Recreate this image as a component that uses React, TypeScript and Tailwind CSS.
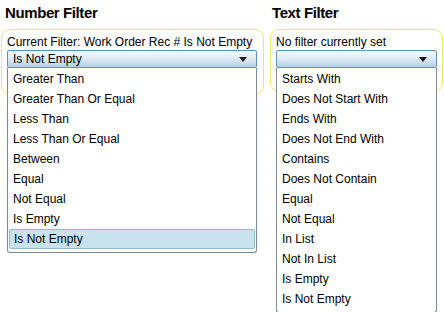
import React from "react";

const font = { fontFamily: '"Liberation Sans", Arial, sans-serif' };

function Arrow() {
  return (
    <svg width="8" height="5" viewBox="0 0 8 5" className="block">
      <path d="M0 0 L8 0 L4 5 Z" fill="#1a1a1a" />
    </svg>
  );
}

function Combo({ value }: { value: string }) {
  return (
    <div className="h-[18px] flex items-center justify-between pl-[5px] pr-[9px] rounded-[2px] border border-[#5e93b8] bg-gradient-to-b from-[#f4f9fc] via-[#dce9f4] to-[#b4cfe5] text-[12px] text-black leading-none">
      <span>{value}</span>
      <Arrow />
    </div>
  );
}

function List({ items, selected }: { items: string[]; selected?: string }) {
  return (
    <div className="absolute left-0 right-0 top-[18px] bg-white border border-[#7d8a96] border-t-0 rounded-b-[3px] px-[1px] pt-[1px] pb-[3px]">
      {items.map((it) => (
        <div
          key={it}
          className={
            "h-[20px] flex items-center pl-[4px] text-[12px] text-black " +
            (it === selected ? "bg-[#c8e3ee] border border-[#8fbccf] rounded-[2px] pl-[3px]" : "")
          }
        >
          {it}
        </div>
      ))}
    </div>
  );
}

export default function App() {
  const num = [
    "Greater Than",
    "Greater Than Or Equal",
    "Less Than",
    "Less Than Or Equal",
    "Between",
    "Equal",
    "Not Equal",
    "Is Empty",
    "Is Not Empty",
  ];
  const txt = [
    "Starts With",
    "Does Not Start With",
    "Ends With",
    "Does Not End With",
    "Contains",
    "Does Not Contain",
    "Equal",
    "Not Equal",
    "In List",
    "Not In List",
    "Is Empty",
    "Is Not Empty",
  ];
  return (
    <div className="w-[444px] h-[312px] bg-white relative overflow-hidden" style={font}>
      <div className="flex pl-[1px] gap-[6px]">
        <div className="w-[263px] flex flex-col">
          <div className="h-[29px] pl-[4px] pt-[2px] text-[15px] font-bold tracking-[-0.4px] text-black">Number Filter</div>
          <div className="h-[66px] border border-[#eee86a] rounded-[9px] pl-[5px] pr-[5px] pt-[5px]">
            <div className="text-[12px] leading-[14px] h-[14px] text-black whitespace-nowrap">Current Filter: Work Order Rec # Is Not Empty</div>
            <div className="relative mt-[1px] mr-[1px]">
              <Combo value="Is Not Empty" />
              <List items={num} selected="Is Not Empty" />
            </div>
          </div>
        </div>
        <div className="w-[173px] flex flex-col">
          <div className="h-[29px] pl-[2px] pt-[2px] text-[15px] font-bold tracking-[-0.4px] text-black">Text Filter</div>
          <div className="h-[63px] border border-[#eee86a] rounded-[9px] pl-[5px] pr-[5px] pt-[5px]">
            <div className="text-[12px] leading-[14px] h-[14px] text-black whitespace-nowrap">No filter currently set</div>
            <div className="relative mt-[1px]">
              <Combo value="" />
              <List items={txt} />
            </div>
          </div>
        </div>
      </div>
    </div>
  );
}
